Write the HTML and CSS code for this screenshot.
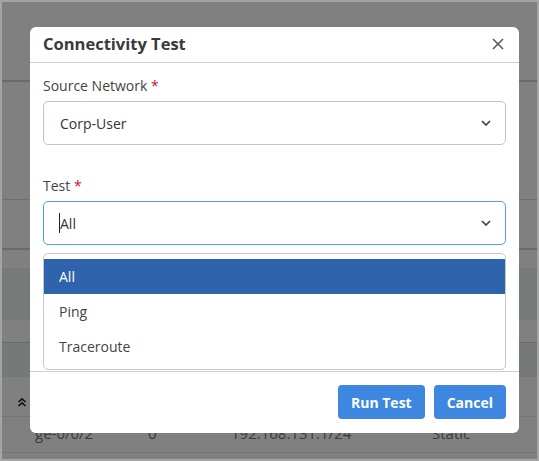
FILE: index.html
```
<!DOCTYPE html>
<html lang="en">
<head>
<meta charset="utf-8">
<title>Connectivity Test</title>
<link rel="stylesheet" href="styles.css">
</head>
<body>
<div class="screen">
  <div class="bg-table">
    <div class="row r1"></div>
    <div class="row r2"></div>
    <div class="row r3"></div>
    <div class="row r4"></div>
    <div class="row r5"></div>
    <div class="row r6"></div>
    <div class="row r7"></div>
    <div class="row r8">
      <svg class="collapse-icon" width="10" height="10" viewBox="0 0 10 10"><polyline points="1.5,5 5,1.8 8.5,5" fill="none" stroke="#111" stroke-width="1.6"/><polyline points="1.5,9 5,5.8 8.5,9" fill="none" stroke="#111" stroke-width="1.6"/></svg>
    </div>
    <div class="row r9">
      <span class="cell c1">ge-0/0/2</span>
      <span class="cell c2">0</span>
      <span class="cell c3">192.168.131.1/24</span>
      <span class="cell c4">Static</span>
    </div>
  </div>

  <div class="modal">
    <div class="modal-header">
      <h1 class="modal-title">Connectivity Test</h1>
      <svg class="close-icon" width="12" height="12" viewBox="0 0 12 12"><path d="M1 1 L11 11 M11 1 L1 11" stroke="#555" stroke-width="1.5" fill="none"/></svg>
    </div>
    <div class="modal-body">
      <div class="field">
        <div class="label">Source Network <span class="req">*</span></div>
        <div class="select">
          <span class="value">Corp-User</span>
          <svg class="chev" width="10" height="6" viewBox="0 0 10 6"><polyline points="1,1 5,5 9,1" fill="none" stroke="#444" stroke-width="1.7"/></svg>
        </div>
      </div>
      <div class="field field-test">
        <div class="label">Test <span class="req">*</span></div>
        <div class="select focused">
          <span class="value"><span class="caret"></span>All</span>
          <svg class="chev" width="10" height="6" viewBox="0 0 10 6"><polyline points="1,1 5,5 9,1" fill="none" stroke="#444" stroke-width="1.7"/></svg>
        </div>
      </div>
      <ul class="menu">
        <li class="option active">All</li>
        <li class="option">Ping</li>
        <li class="option">Traceroute</li>
      </ul>
    </div>
    <div class="modal-footer">
      <button class="btn">Run Test</button>
      <button class="btn">Cancel</button>
    </div>
  </div>
</div>
</body>
</html>
```
FILE: styles.css
```
* { box-sizing: border-box; }
html, body { margin: 0; padding: 0; }
body {
  font-family: "Open Sans", "Liberation Sans", sans-serif;
  background: #a4a4a4;
}
.screen {
  position: relative;
  width: 539px;
  height: 461px;
  border: 2px solid #a4a4a4;
  background: #808080;
  overflow: hidden;
}
.bg-table { display: flex; flex-direction: column; }
.row { display: flex; align-items: center; }
.r1 { height: 80px; border-bottom: 2px solid #6a6a6a; }
.r2 { height: 118px; border-bottom: 1px solid #6e6e6e; }
.r3 { height: 50px; border-bottom: 2px solid #696969; }
.r4 { height: 18px; }
.r5 { height: 52px; background: #777a7a; }
.r6 { height: 23px; border-bottom: 1px solid #6a6a6a; }
.r7 { height: 34px; background: #767979; }
.r8 { height: 40px; border-bottom: 1px solid #747474; padding-left: 15px; padding-top: 10px; }
.r9 { height: 36px; border-bottom: 1px solid #747474; position: relative; font-size: 15px; color: #3b3b3b; }
.collapse-icon { display: block; }
.cell { position: absolute; top: 6px; }
.c1 { left: 33px; }
.c2 { left: 146px; }
.c3 { left: 229px; }
.c4 { left: 430px; }

.modal {
  position: absolute;
  left: 28px;
  top: 25px;
  width: 489px;
  height: 406px;
  background: #fff;
  border-radius: 6px;
  display: flex;
  flex-direction: column;
}
.modal-header {
  height: 36px;
  border-bottom: 1px solid #cfcfcf;
  display: flex;
  align-items: center;
  justify-content: space-between;
  padding: 0 15px 2px 13px;
}
.modal-title {
  margin: 0;
  font-size: 16.5px;
  font-weight: 700;
  color: #3a3a3a;
}
.close-icon { display: block; margin-top: 1px; }
.modal-body {
  position: relative;
  flex: 1;
  padding: 13px 13px 0 13px;
}
.field { display: flex; flex-direction: column; }
.field-test { margin-top: 31px; }
.label {
  font-size: 14px;
  line-height: 20px;
  color: #444;
  margin-bottom: 5px;
}
.req { color: #c8102e; }
.select {
  height: 44px;
  border: 1px solid #c4c4c4;
  border-radius: 5px;
  display: flex;
  align-items: center;
  justify-content: space-between;
  padding: 0 14px 0 16px;
  font-size: 14px;
  color: #333;
}
.select.focused { border-color: #4ea2e6; }
.value { display: flex; align-items: center; }
.caret {
  display: inline-block;
  width: 1px;
  height: 20px;
  background: #222;
  margin-left: -1px;
}
.chev { display: block; }
.menu {
  position: absolute;
  left: 13px;
  right: 13px;
  top: 190px;
  margin: 0;
  padding: 5px 0;
  list-style: none;
  background: #fff;
  border: 1px solid #c8c8c8;
  border-radius: 5px;
}
.option {
  height: 35px;
  line-height: 35px;
  padding-left: 15px;
  font-size: 14px;
  color: #444;
}
.option.active { background: #2f64ad; color: #fff; }
.modal-footer {
  height: 62px;
  border-top: 1px solid #cfcfcf;
  display: flex;
  justify-content: flex-end;
  align-items: flex-start;
  gap: 9px;
  padding: 13px 13px 0 0;
}
.btn {
  height: 34px;
  border: none;
  border-radius: 4px;
  background: #3d87e0;
  color: #fff;
  font-family: inherit;
  font-size: 14px;
  font-weight: 700;
  padding: 0 13px;
}
```
